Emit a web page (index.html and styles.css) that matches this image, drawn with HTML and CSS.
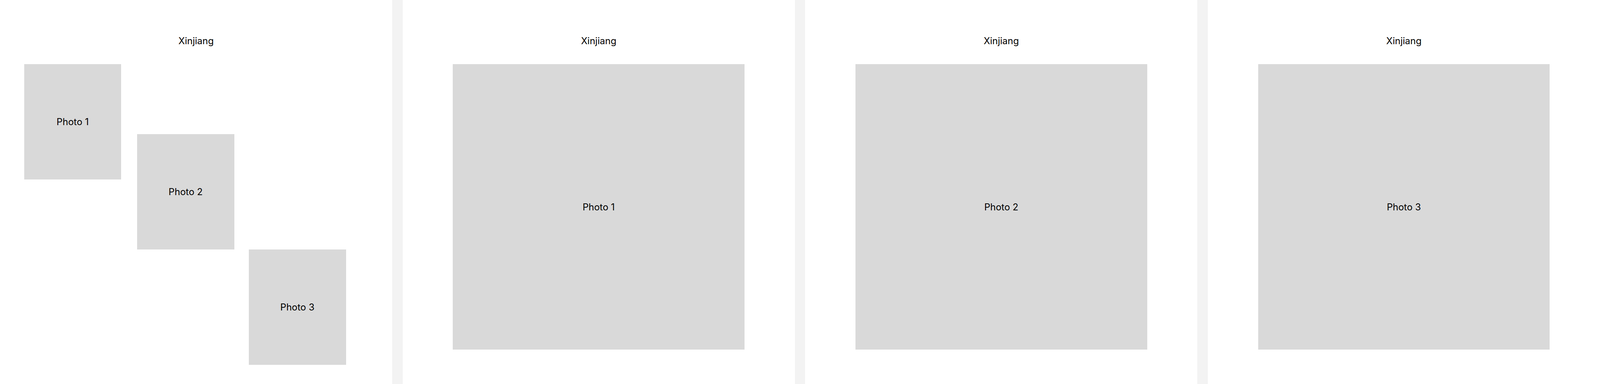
FILE: index.html
```html
<!DOCTYPE html>
<html lang="en">
<head>
<meta charset="utf-8">
<title>Xinjiang</title>
<link rel="stylesheet" href="styles.css">
</head>
<body>
<main class="strip">
  <section class="frame">
    <h1 class="title">Xinjiang</h1>
    <div class="collage">
      <div class="photo small p1">Photo 1</div>
      <div class="photo small p2">Photo 2</div>
      <div class="photo small p3">Photo 3</div>
    </div>
  </section>
  <section class="frame">
    <h1 class="title">Xinjiang</h1>
    <div class="single">
      <div class="photo large">Photo 1</div>
    </div>
  </section>
  <section class="frame">
    <h1 class="title">Xinjiang</h1>
    <div class="single">
      <div class="photo large">Photo 2</div>
    </div>
  </section>
  <section class="frame">
    <h1 class="title">Xinjiang</h1>
    <div class="single">
      <div class="photo large">Photo 3</div>
    </div>
  </section>
</main>
</body>
</html>
```

FILE: styles.css
```css
html, body {
  margin: 0;
  padding: 0;
  background: #f3f3f3;
  overflow: hidden;
}

body {
  font-family: Inter, "Noto Sans", "Liberation Sans", sans-serif;
  color: #000;
}

/* 40px gaps on a 6168px-wide canvas, kept proportional */
.strip {
  display: flex;
  gap: 0.6485vw;
  width: 100%;
  height: 982px;
}

.frame {
  flex: 1 1 0;
  min-width: 0;
  height: 982px;
  background: #ffffff;
  box-sizing: border-box;
  padding-top: 90px;
  display: flex;
  flex-direction: column;
}

.title {
  margin: 0 0 45px 0;
  font-size: 24px;
  font-weight: 400;
  line-height: 29px;
  text-align: center;
  white-space: nowrap;
}

.photo {
  background: #d9d9d9;
  display: flex;
  align-items: center;
  justify-content: center;
  font-size: 24px;
  line-height: 29px;
  white-space: nowrap;
  flex-shrink: 0;
}

.collage {
  display: flex;
  align-items: flex-start;
  padding-left: 6.15%;
}

.small {
  width: 26.39%;
  height: 295px;
}

.p2 {
  margin-left: 4.3%;
  margin-top: 179px;
}

.p3 {
  margin-left: 3.97%;
  margin-top: 474px;
}

.single {
  display: flex;
  justify-content: center;
}

.large {
  width: 74.34%;
  height: 730px;
}
```
